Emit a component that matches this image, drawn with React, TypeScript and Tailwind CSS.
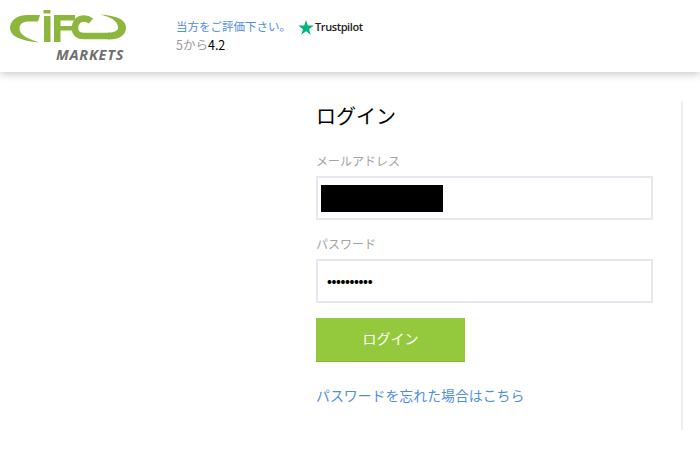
const jp = "font-['Noto_Sans_CJK_JP','Noto_Sans',sans-serif]";

function Logo() {
  return (
    <div className="relative w-[130px] h-[64px]">
      <svg width="130" height="46" viewBox="0 0 130 46" className="absolute left-0 top-0">
        {/* left swoosh */}
        <path d="M40 15 H28 C16 15 10 21 10 28 C10 36 20 41 40 42.5 C28 39 19.5 35 19.5 28.5 C19.5 24 23 21.5 29 21.5 L38 21.5 Z" fill="#8cb63c" />
        {/* i */}
        <rect x="43.5" y="10" width="7" height="3.5" fill="#8cb63c" />
        <rect x="44" y="16" width="6.5" height="26" fill="#8cb63c" />
        {/* F */}
        <path d="M54 42 V15 H75 V20.5 H60.5 V26 H73 V30.5 H60.5 V42 Z" fill="#8cb63c" />
        {/* C */}
        <path d="M91 21 C88.5 19 86 18.5 84 18.5 C78 18.5 75 23 75 28.5 C75 33.5 78.5 36 84 36 H109" fill="none" stroke="#8cb63c" strokeWidth="6.5" />
        {/* loop */}
        <path d="M108 39.5 C120 39.5 126 35 126 27.5 C126 20 117 15.5 100 14.5 C111 17 118 21 118 27.5 C118 31 115 32.5 108 32.5 Z" fill="#8cb63c" />
      </svg>
      <span className="absolute left-[56px] top-[47px] text-[14.5px] leading-[16px] font-bold italic tracking-[0.75px] text-[#6f6f6f] font-['Open_Sans',sans-serif]">MARKETS</span>
    </div>
  );
}

export default function App() {
  return (
    <div className={`w-[700px] h-[466px] bg-white overflow-hidden ${jp}`}>
      <header className="h-[72px] flex items-start bg-white shadow-[0_2px_8px_rgba(0,0,0,0.22)]">
        <div className="w-[176px] shrink-0">
          <Logo />
        </div>
        <div className="pt-[17px]">
          <div className="flex items-center h-[20px]">
            <a className="text-[11.5px] text-[#4f8de0]">当方をご評価下さい。</a>
            <svg width="16" height="15" viewBox="0 0 24 23" className="ml-[7px]">
              <path d="M12 0 L14.8 8.6 H24 L16.6 14 L19.4 22.8 L12 17.4 L4.6 22.8 L7.4 14 L0 8.6 H9.2 Z" fill="#00b67a" />
            </svg>
            <span className="ml-[1px] text-[11px] font-semibold tracking-[-0.4px] text-[#222] font-['Open_Sans',sans-serif]">Trustpilot</span>
          </div>
          <div className="text-[12.5px] leading-[16px] text-[#9a9a9a]">
            5から<span className="text-black">4.2</span>
          </div>
        </div>
      </header>

      <main className="flex pl-[316px] pt-[29px]">
        <div className="w-[337px]">
          <h1 className="text-[20px] leading-[30px] text-black">ログイン</h1>
          <label className="block mt-[20px] text-[12px] leading-[20px] text-[#a3a3a3]">メールアドレス</label>
          <div className="mt-[5px] h-[44px] border-2 border-[#e6e8ef] flex items-center pl-[3px]">
            <div className="w-[122px] h-[27px] bg-black" />
          </div>
          <label className="block mt-[14px] text-[12px] leading-[20px] text-[#a3a3a3]">パスワード</label>
          <div className="mt-[5px] h-[44px] border-2 border-[#e6e8ef] flex items-center pl-[9px]">
            <span className="text-[13px] font-bold tracking-[-0.4px] text-black">••••••••••</span>
          </div>
          <button className="block mt-[15px] w-[149px] h-[44px] pb-[3px] bg-[#95c93d] border-b border-[#84bb2a] text-white text-[14px]">ログイン</button>
          <a className="block mt-[23px] text-[13.9px] leading-[20px] text-[#4f8de0]">パスワードを忘れた場合はこちら</a>
        </div>
        <div className="ml-[28px] w-[2px] h-[329px] bg-[#eeeeee]" />
      </main>
    </div>
  );
}
